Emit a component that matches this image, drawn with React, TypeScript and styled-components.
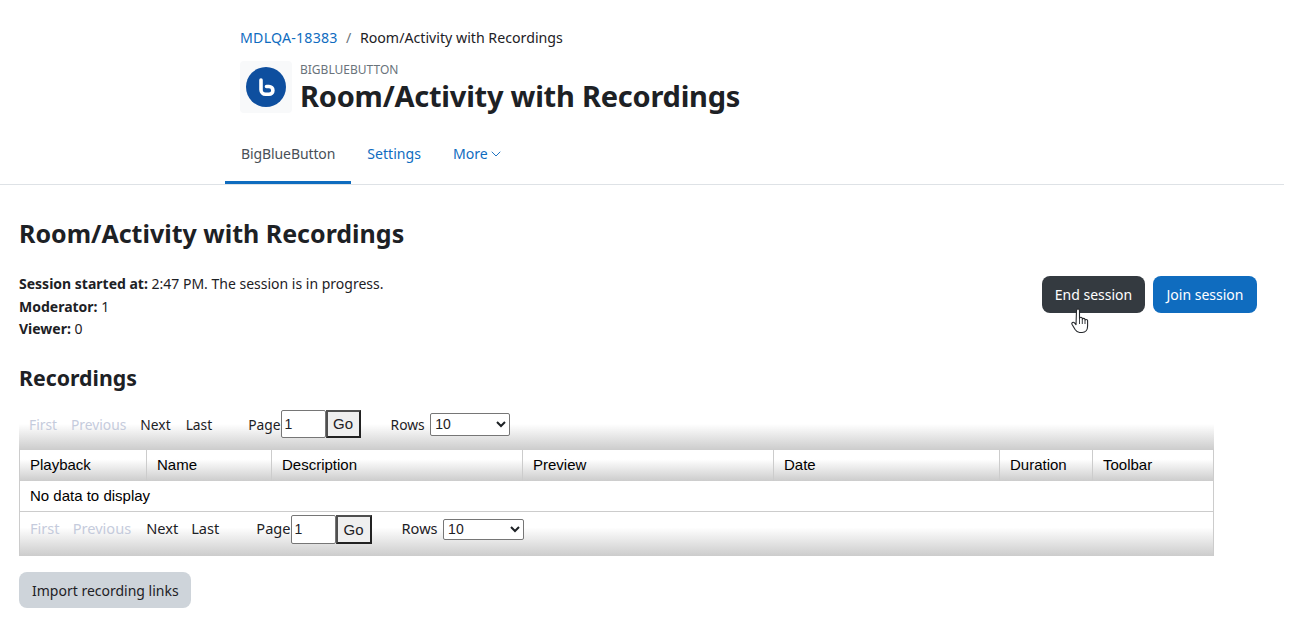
import React from 'react'
import styled, { createGlobalStyle } from 'styled-components'
import { ChevronDown } from 'lucide-react'

const ui = `'Noto Sans', 'Open Sans', sans-serif`
const arial = `'Liberation Sans', Arial, sans-serif`

const GlobalStyle = createGlobalStyle`
    html, body {
        margin: 0;
        padding: 0;
        background: #fff;
        overflow: hidden;
    }
    body {
        font-family: ${ui};
        font-size: 14px;
        color: #1d2125;
    }
`

const Page = styled.div`
    width: 1284px;
    height: 641px;
    position: relative;
`
const Header = styled.header`
    padding: 27px 0 0 240px;
`
const Breadcrumb = styled.nav`
    display: flex;
    align-items: center;
    height: 20px;
    font-size: 14.2px;
`
const CrumbLink = styled.a`
    color: #0f6cbf;
    letter-spacing: 0.2px;
`
const CrumbSep = styled.span`
    color: #6a737b;
    padding: 0 8.500px;
`
const Heading = styled.div`
    display: flex;
    align-items: flex-start;
    gap: 8px;
    margin-top: 14px;
`
const IconTile = styled.div`
    width: 52px;
    height: 52px;
    border-radius: 4px;
    background: #f8f9fa;
    display: flex;
    align-items: center;
    justify-content: center;
`
const HeadingText = styled.div`
    display: flex;
    flex-direction: column;
`
const Eyebrow = styled.div`
    font-size: 12px;
    line-height: 16px;
    margin-top: 1px;
    color: #6a737b;
`
const PageTitle = styled.h1`
    margin: -1px 0 0;
    font-size: 29px;
    line-height: 38px;
    font-weight: 700;
    color: #1d2125;
    letter-spacing: -0.23px;
`
const Tabs = styled.nav`
    display: flex;
    height: 63px;
    margin-top: 6px;
    padding-left: 225px;
    border-bottom: 1px solid #dee2e6;
`
const Tab = styled.a<{ $active?: boolean }>`
    display: flex;
    align-items: center;
    height: 63px;
    box-sizing: border-box;
    padding: 5px 16px 0;
    font-size: ${(p) => (p.$active ? '14px' : '14.1px')};
    letter-spacing: ${(p) => (p.$active ? '-0.1px' : '0')};
    color: ${(p) => (p.$active ? '#495057' : '#0f6cbf')};
    border-bottom: 3px solid ${(p) => (p.$active ? '#0f6cbf' : 'transparent')};
`
const Main = styled.main`
    padding: 32px 0 0 19px;
`
const SectionTitle = styled.h2`
    margin: 0;
    font-size: 25px;
    line-height: 32px;
    font-weight: 700;
    color: #1d2125;
`
const SessionRow = styled.div`
    display: flex;
    justify-content: space-between;
    align-items: flex-start;
    margin-top: 24px;
    padding-right: 27px;
`
const SessionInfo = styled.div`
    font-size: 14px;
    line-height: 22.5px;
    color: #1d2125;
`
const Actions = styled.div`
    display: flex;
    gap: 8px;
    margin-top: 3px;
`
const ActionButton = styled.button<{ $bg: string; $w: number }>`
    width: ${(p) => p.$w}px;
    height: 37px;
    padding: 0;
    border: 0;
    border-radius: 8px;
    background: ${(p) => p.$bg};
    color: #fff;
    font-family: ${ui};
    font-size: 14px;
`
const SubTitle = styled.h3`
    margin: 23px 0 0;
    font-size: 21.3px;
    line-height: 28px;
    font-weight: 700;
    color: #1d2125;
`
const Grid = styled.div`
    width: 1195px;
    margin-top: 18px;
`
const Pager = styled.div<{ $bottom?: boolean }>`
    display: flex;
    align-items: flex-start;
    box-sizing: border-box;
    height: ${(p) => (p.$bottom ? '44px' : '40px')};
    padding: ${(p) => (p.$bottom ? '3px 0 0 10px' : '0 0 0 10px')};
    font-size: ${(p) => (p.$bottom ? '14.6px' : '13.8px')};
    background: linear-gradient(to bottom, #fff 35%, #ccc 100%);
    border-right: ${(p) => (p.$bottom ? '1px solid #ccc' : '0')};
    border-left: ${(p) => (p.$bottom ? '1px solid #ccc' : '0')};
`
const PagerLink = styled.span<{ $off?: boolean; $gap: number; $h: number }>`
    color: ${(p) => (p.$off ? '#c5cbdc' : '#1d2125')};
    margin-right: ${(p) => p.$gap}px;
    line-height: ${(p) => p.$h}px;
    white-space: nowrap;
`
const PageInput = styled.input<{ $w: number; $h: number }>`
    box-sizing: border-box;
    width: ${(p) => p.$w}px;
    height: ${(p) => p.$h}px;
    margin: 0;
    padding: 0 3px;
    border: 1px solid #767676;
    border-radius: 2px;
    font-family: ${arial};
    font-size: 14px;
    color: #1d2125;
`
const GoButton = styled.button<{ $w: number; $h: number; $gap: number }>`
    box-sizing: border-box;
    width: ${(p) => p.$w}px;
    height: ${(p) => p.$h}px;
    margin: 0 ${(p) => p.$gap}px 0 0;
    padding: 0;
    background: #efefef;
    border: 2px solid;
    border-color: #4f4f4f #222 #222 #4f4f4f;
    font-family: ${arial};
    font-size: 15px;
    color: #1d2125;
`
const RowsSelect = styled.select<{ $w: number; $h: number; $top: number }>`
    box-sizing: border-box;
    width: ${(p) => p.$w}px;
    height: ${(p) => p.$h}px;
    margin: ${(p) => p.$top}px 0 0 5.500px;
    font-family: ${arial};
    font-size: 14px;
    background: #fff;
    border: 1px solid #767676;
    border-radius: 2px;
    color: #1d2125;
`
const Columns = styled.div`
    display: grid;
    grid-template-columns: 126px 125px 251px 251px 226px 93px 1fr;
    height: 31px;
    border: solid #ccc;
    border-width: 0 1px;
    box-sizing: border-box;
    background: linear-gradient(to bottom, #fff 30%, #ccc 100%);
`
const ColumnHead = styled.div`
    display: flex;
    align-items: center;
    padding-left: 10px;
    padding-bottom: 2px;
    font-family: ${arial};
    font-size: 15px;
    color: #000;
    border-left: 1px solid #ccc;
    &:first-child {
        border-left: 0;
    }
`
const EmptyRow = styled.div`
    box-sizing: border-box;
    height: 31px;
    padding: 6px 0 0 10px;
    border: solid #ccc;
    border-width: 0 1px 1px;
    font-family: ${arial};
    font-size: 15px;
    line-height: 17px;
    color: #000;
`
const ImportButton = styled.button`
    display: block;
    height: 36px;
    margin-top: 16px;
    padding: 2px 12px 0 13px;
    border: 0;
    border-radius: 8px;
    background: #ced4da;
    color: #1d2125;
    font-family: ${ui};
    font-size: 14px;
`
const Cursor = styled.svg`
    position: absolute;
    left: 1071px;
    top: 308px;
`

const columns = ['Playback', 'Name', 'Description', 'Preview', 'Date', 'Duration', 'Toolbar']

const BbbLogo = () => (
    <svg width="40" height="40" viewBox="0 0 40 40">
        <circle cx="20" cy="20" r="20" fill="#0e4f9f" />
        <path
            d="M15 13V22.800a4.500 4.500 0 0 0 4.500 4.500H23a3.900 3.900 0 0 0 0-7.800H20.500"
            fill="none"
            stroke="#fff"
            strokeWidth="3.600"
            strokeLinecap="round"
            strokeLinejoin="round"
        />
    </svg>
)

const HandCursor = () => (
    <Cursor width="20" height="26" viewBox="0 0 20 26">
        <path
            d="M5.500 2.500c0-2 3-2 3 0v8c0-1.600 2.800-1.600 2.800 0v1c0-1.500 2.700-1.500 2.700 0v1c0-1.400 2.600-1.400 2.600 0v5.500c0 3.500-2 6.500-5.500 6.500h-2.500c-2.500 0-3.500-1.500-4.500-3l-3-5c-1-1.800 1.200-3 2.400-1.600l1.500 1.800z"
            fill="#fff"
            stroke="#24272b"
            strokeWidth="1.100"
            strokeLinejoin="round"
        />
        <path d="M8.500 11v5M11.300 12v4M14 13v3" stroke="#24272b" strokeWidth="0.900" fill="none" />
    </Cursor>
)

type PagerBarProps = {
    bottom?: boolean
}

const PagerBar: React.FC<PagerBarProps> = ({ bottom }) => {
    const h = bottom ? 29 : 28
    const textH = bottom ? 27 : 30
    return (
        <Pager $bottom={bottom}>
            <PagerLink $off $gap={bottom ? 13 : 14} $h={textH}>First</PagerLink>
            <PagerLink $off $gap={bottom ? 15 : 14} $h={textH}>Previous</PagerLink>
            <PagerLink $gap={bottom ? 13 : 15} $h={textH}>Next</PagerLink>
            <PagerLink $gap={bottom ? 37 : 36} $h={textH}>Last</PagerLink>
            <PagerLink $gap={0} $h={textH}>Page</PagerLink>
            <PageInput $w={45} $h={h} defaultValue="1" />
            <GoButton $w={bottom ? 36 : 35} $h={h} $gap={30}>Go</GoButton>
            <PagerLink $gap={0} $h={textH}>Rows</PagerLink>
            <RowsSelect $w={bottom ? 81 : 80} $h={bottom ? 21 : 23} $top={bottom ? 4 : 3} defaultValue="10">
                <option>10</option>
            </RowsSelect>
        </Pager>
    )
}

export default function App() {
    return (
        <Page>
            <GlobalStyle />
            <Header>
                <Breadcrumb>
                    <CrumbLink>MDLQA-18383</CrumbLink>
                    <CrumbSep>/</CrumbSep>
                    <span>Room/Activity with Recordings</span>
                </Breadcrumb>
                <Heading>
                    <IconTile>
                        <BbbLogo />
                    </IconTile>
                    <HeadingText>
                        <Eyebrow>BIGBLUEBUTTON</Eyebrow>
                        <PageTitle>Room/Activity with Recordings</PageTitle>
                    </HeadingText>
                </Heading>
            </Header>
            <Tabs>
                <Tab $active>BigBlueButton</Tab>
                <Tab>Settings</Tab>
                <Tab>
                    More
                    <ChevronDown size={16} strokeWidth={1.4} />
                </Tab>
            </Tabs>
            <Main>
                <SectionTitle>Room/Activity with Recordings</SectionTitle>
                <SessionRow>
                    <SessionInfo>
                        <div><b>Session started at:</b> 2:47 PM. The session is in progress.</div>
                        <div><b>Moderator:</b> 1</div>
                        <div><b>Viewer:</b> 0</div>
                    </SessionInfo>
                    <Actions>
                        <ActionButton $bg="#343a40" $w={103}>End session</ActionButton>
                        <ActionButton $bg="#0f6cbf" $w={104}>Join session</ActionButton>
                    </Actions>
                </SessionRow>
                <SubTitle>Recordings</SubTitle>
                <Grid>
                    <PagerBar />
                    <Columns>
                        {columns.map((c) => (
                            <ColumnHead key={c}>{c}</ColumnHead>
                        ))}
                    </Columns>
                    <EmptyRow>No data to display</EmptyRow>
                    <PagerBar bottom />
                </Grid>
                <ImportButton>Import recording links</ImportButton>
            </Main>
            <HandCursor />
        </Page>
    )
}
